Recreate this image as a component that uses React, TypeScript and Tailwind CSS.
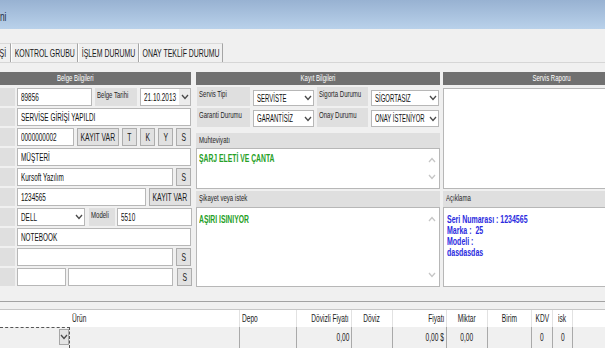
import React from "react";

type Origin = "l" | "r" | "c";

const T: React.FC<{ children?: React.ReactNode; o?: Origin; s?: string; className?: string }> = ({
  children,
  o = "l",
  s = "scale-x-[0.64]",
  className = "",
}) => {
  const origin = o === "l" ? "origin-left" : o === "r" ? "origin-right" : "origin-center";
  return <span className={`inline-block shrink-0 whitespace-pre ${s} ${origin} ${className}`}>{children}</span>;
};

const Chev = ({ up = false, c = "#4a4a4a" }: { up?: boolean; c?: string }) => (
  <svg width="8" height="6" viewBox="0 0 8 6" className="shrink-0">
    <path d={up ? "M1 5L4 1.5L7 5" : "M1 1L4 4.5L7 1"} fill="none" stroke={c} strokeWidth="1.3" />
  </svg>
);

const Box = ({ w, children }: { w: string; children?: React.ReactNode }) => (
  <div className={`${w} h-full shrink-0 bg-white border border-[#b7b7b7] flex items-center pl-[3px] overflow-hidden text-[10px] text-[#101010]`}>
    <T>{children}</T>
  </div>
);

const Select = ({ w, text, btn = false, s = "scale-x-[0.64]" }: { w: string; text: string; btn?: boolean; s?: string }) => (
  <div className={`${w} h-full shrink-0 bg-white border border-[#b7b7b7] flex items-center pl-[3px] overflow-hidden text-[10px] text-[#101010]`}>
    <div className="flex-1 min-w-0 overflow-hidden">
      <T s={s}>{text}</T>
    </div>
    <div className={`w-[11px] h-full shrink-0 flex items-center justify-center ${btn ? "bg-[#ececec]" : ""}`}>
      <Chev />
    </div>
  </div>
);

const Btn = ({ w, children }: { w: string; children: React.ReactNode }) => (
  <div className={`${w} h-full shrink-0 bg-[#e1e1e1] border border-[#adadad] flex items-center justify-center overflow-hidden text-[11px] text-[#1a1a1a]`}>
    <T o="c" s="scale-x-[0.62]">{children}</T>
  </div>
);

const Lbl = ({ w, children }: { w: string; children?: React.ReactNode }) => (
  <div className={`${w} h-full shrink-0 bg-[#dfdfdf] overflow-hidden pl-[2px] pt-[1px] text-[9px] leading-[12px] text-[#262626]`}>
    <T s="scale-x-[0.67]">{children}</T>
  </div>
);

const PanelHead = ({ children }: { children: React.ReactNode }) => (
  <div className="h-[13px] bg-[#707070] flex items-center justify-center overflow-hidden text-[9px] text-white">
    <T o="c" s="scale-x-[0.67]">{children}</T>
  </div>
);

const Bar = ({ children, h }: { children: React.ReactNode; h: string }) => (
  <div className={`${h} bg-[#dfdfdf] flex items-center pl-[3px] overflow-hidden text-[9px] text-[#262626]`}>
    <T s="scale-x-[0.67]">{children}</T>
  </div>
);

const Area = ({ h, children, arrows = false }: { h: string; children?: React.ReactNode; arrows?: boolean }) => (
  <div className={`${h} bg-white border border-[#b7b7b7] flex overflow-hidden`}>
    <div className="flex-1 min-w-0 pl-[2px] pt-[4px] overflow-hidden">{children}</div>
    {arrows && (
      <div className="w-[14px] shrink-0 flex flex-col items-center justify-between py-[8px]">
        <Chev up c="#c6c6c6" />
        <Chev c="#c6c6c6" />
      </div>
    )}
  </div>
);

const Tab = ({ w, children, extra = "" }: { w: string; children: React.ReactNode; extra?: string }) => (
  <div className={`${w} h-full shrink-0 border-t border-t-[#d9d9d9] border-l border-l-white border-r border-r-[#a5a5a5] flex items-center justify-center overflow-hidden text-[11px] text-[#1a1a1a] ${extra}`}>
    <T o="c" s="scale-x-[0.63]">{children}</T>
  </div>
);

const cols = [
  { w: "w-[70px]", head: "", val: "", j: "justify-start", o: "l" as Origin, hb: "", rb: "" },
  { w: "w-[170px]", head: "Ürün", val: "", j: "justify-start", o: "l" as Origin, hb: "border-r border-[#e2e2e2]", rb: "border-r border-[#a9a9a9]" },
  { w: "w-[57px]", head: "Depo", val: "", j: "justify-start", o: "l" as Origin, hb: "border-r border-[#e2e2e2]", rb: "border-r border-[#a9a9a9]" },
  { w: "w-[55px]", head: "Dövizli Fiyatı", val: "0,00", j: "justify-end", o: "r" as Origin, hb: "border-r border-[#e2e2e2]", rb: "border-r border-[#a9a9a9]" },
  { w: "w-[41px]", head: "Döviz", val: "", j: "justify-center", o: "c" as Origin, hb: "border-r border-[#e2e2e2]", rb: "border-r border-[#a9a9a9]" },
  { w: "w-[54px]", head: "Fiyatı", val: "0,00 $", j: "justify-end", o: "r" as Origin, hb: "border-r border-[#e2e2e2]", rb: "border-r border-[#a9a9a9]" },
  { w: "w-[41px]", head: "Miktar", val: "0,00", j: "justify-center", o: "c" as Origin, hb: "border-r border-[#e2e2e2]", rb: "border-r border-[#a9a9a9]" },
  { w: "w-[44px]", head: "Birim", val: "", j: "justify-center", o: "c" as Origin, hb: "border-r border-[#e2e2e2]", rb: "border-r border-[#a9a9a9]" },
  { w: "w-[21px]", head: "KDV", val: "0", j: "justify-center", o: "c" as Origin, hb: "border-r border-[#e2e2e2]", rb: "border-r border-[#a9a9a9]" },
  { w: "w-[20px]", head: "isk", val: "0", j: "justify-center", o: "c" as Origin, hb: "border-r border-[#e2e2e2]", rb: "border-r border-[#a9a9a9]" },
  { w: "w-[32px]", head: "", val: "", j: "justify-start", o: "l" as Origin, hb: "", rb: "" },
];

export default function App() {
  return (
    <div className="w-[605px] h-[348px] overflow-hidden bg-[#f0f0f0] font-['Liberation_Sans',Arial,sans-serif] text-[#1a1a1a]">
      {/* window title */}
      <div className="h-[29px] bg-linear-to-b from-[#98b2d2] to-[#b9d1ea] flex items-center pt-[4px]">
        <div className="w-[6px] shrink-0 flex justify-end text-[13px] text-[#1f2d44]">
          <T o="r">Servis Formu - Yeni</T>
        </div>
      </div>

      {/* tabs */}
      <div className="mt-[14px] h-[20px] flex border-b border-[#d6d6d6]">
        <Tab w="w-[58px]" extra="-ml-[47px]">SERVİS GİRİŞİ</Tab>
        <Tab w="w-[67px]">KONTROL GRUBU</Tab>
        <Tab w="w-[61px]">İŞLEM DURUMU</Tab>
        <Tab w="w-[84px]">ONAY TEKLİF DURUMU</Tab>
      </div>

      {/* panels */}
      <div className="mt-[9px] h-[216px] flex -ml-[41px]">
        {/* Belge Bilgileri */}
        <div className="w-[232px] shrink-0 flex flex-col">
          <PanelHead>Belge Bilgileri</PanelHead>
          <div className="mt-[3px] flex flex-col gap-[2px]">
            <div className="h-[18px] flex gap-[2px]">
              <Lbl w="w-[56px]">Belge Numara</Lbl>
              <div className="w-[174px] flex gap-[3px]">
                <Box w="w-[75px]">89856</Box>
                <Lbl w="w-[42px]">Belge Tarihi</Lbl>
                <Select w="w-[51px]" text="21.10.2013" btn />
              </div>
            </div>
            <div className="h-[18px] flex gap-[2px]">
              <Lbl w="w-[56px]" />
              <Box w="w-[174px]">SERVİSE GİRİŞİ YAPILDI</Box>
            </div>
            <div className="h-[18px] flex gap-[2px]">
              <Lbl w="w-[56px]" />
              <div className="w-[174px] flex gap-[3px]">
                <Box w="w-[57px]">0000000002</Box>
                <Btn w="w-[42px]">KAYIT VAR</Btn>
                <Btn w="w-[15px]">T</Btn>
                <Btn w="w-[15px]">K</Btn>
                <Btn w="w-[15px]">Y</Btn>
                <Btn w="w-[15px]">S</Btn>
              </div>
            </div>
            <div className="h-[18px] flex gap-[2px]">
              <Lbl w="w-[56px]" />
              <Box w="w-[174px]">MÜŞTERİ</Box>
            </div>
            <div className="h-[18px] flex gap-[2px]">
              <Lbl w="w-[56px]" />
              <div className="w-[174px] flex gap-[3px]">
                <Box w="w-[156px]">Kursoft Yazılım</Box>
                <Btn w="w-[15px]">S</Btn>
              </div>
            </div>
            <div className="h-[18px] flex gap-[2px]">
              <Lbl w="w-[56px]" />
              <div className="w-[174px] flex gap-[3px]">
                <Box w="w-[129px]">1234565</Box>
                <Btn w="w-[42px]">KAYIT VAR</Btn>
              </div>
            </div>
            <div className="h-[18px] flex gap-[2px]">
              <Lbl w="w-[56px]" />
              <div className="w-[174px] flex gap-[2px]">
                <Select w="w-[68px]" text="DELL" />
                <div className="w-[1px]" />
                <Lbl w="w-[26px]">Modeli</Lbl>
                <Box w="w-[75px]">5510</Box>
              </div>
            </div>
            <div className="h-[18px] flex gap-[2px]">
              <Lbl w="w-[56px]" />
              <Box w="w-[174px]">NOTEBOOK</Box>
            </div>
            <div className="h-[18px] flex gap-[2px]">
              <Lbl w="w-[56px]" />
              <div className="w-[174px] flex gap-[3px]">
                <Box w="w-[156px]" />
                <Btn w="w-[15px]">S</Btn>
              </div>
            </div>
            <div className="h-[18px] flex gap-[2px]">
              <Lbl w="w-[56px]" />
              <div className="w-[174px] flex gap-[2px]">
                <Box w="w-[49px]" />
                <Box w="w-[105px]" />
                <div className="w-[1px]" />
                <Btn w="w-[15px]">S</Btn>
              </div>
            </div>
          </div>
        </div>

        {/* Kayıt Bilgileri */}
        <div className="ml-[5px] w-[244px] shrink-0 flex flex-col">
          <PanelHead>Kayıt Bilgileri</PanelHead>
          <div className="mt-[2px] flex flex-col gap-[2px] pl-[1px]">
            <div className="h-[19px] flex gap-[3px]">
              <Lbl w="w-[53px]">Servis Tipi</Lbl>
              <div className="mt-[3px] h-[16px]"><Select w="w-[61px]" text="SERVİSTE" s="scale-x-[0.6]" /></div>
              <Lbl w="w-[51px]">Sigorta Durumu</Lbl>
              <div className="mt-[3px] h-[16px]"><Select w="w-[68px]" text="SİGORTASIZ" s="scale-x-[0.6]" /></div>
            </div>
            <div className="h-[19px] flex gap-[3px]">
              <Lbl w="w-[53px]">Garanti Durumu</Lbl>
              <div className="mt-[2px] h-[17px]"><Select w="w-[61px]" text="GARANTİSİZ" s="scale-x-[0.6]" /></div>
              <Lbl w="w-[51px]">Onay Durumu</Lbl>
              <div className="mt-[2px] h-[17px]"><Select w="w-[68px]" text="ONAY İSTENİYOR" s="scale-x-[0.59]" /></div>
            </div>
          </div>
          <div className="mt-[6px]">
            <Bar h="h-[15px]">Muhteviyatı</Bar>
          </div>
          <Area h="h-[41px]" arrows>
            <div className="text-[10px] font-bold text-[#26a026] leading-[12px]">
              <T s="scale-x-[0.68]">ŞARJ ELETİ VE ÇANTA</T>
            </div>
          </Area>
          <div className="mt-[2px]">
            <Bar h="h-[16px]">Şikayet veya istek</Bar>
          </div>
          <Area h="h-[80px]" arrows>
            <div className="text-[10px] font-bold text-[#26a026] leading-[12px] pt-[2px]">
              <T s="scale-x-[0.68]">AŞIRI ISINIYOR</T>
            </div>
          </Area>
        </div>

        {/* Servis Raporu */}
        <div className="ml-[3px] w-[218px] shrink-0 flex flex-col">
          <PanelHead>Servis Raporu</PanelHead>
          <div className="mt-[3px]">
            <Area h="h-[101px]" />
          </div>
          <div className="mt-[2px]">
            <Bar h="h-[16px]">Açıklama</Bar>
          </div>
          <Area h="h-[80px]">
            <div className="flex flex-col text-[10px] font-bold text-[#2b2be0] leading-[11px] pl-[1px] pt-[2px]">
              <T s="scale-x-[0.7]">Seri Numarası : 1234565</T>
              <T s="scale-x-[0.7]">Marka :  25</T>
              <T s="scale-x-[0.7]">Modeli :</T>
              <T s="scale-x-[0.7]">dasdasdas</T>
            </div>
          </Area>
        </div>
      </div>

      {/* grid */}
      <div className="mt-[13px] border-t border-[#a2a2a2]">
        <div className="h-[7px]" />
        <div className="h-[18px] border-t border-[#c6c6c6] bg-white flex text-[10px] text-[#1a1a1a]">
          {cols.map((c, i) => (
            <div key={i} className={`${c.w} h-full shrink-0 flex items-center overflow-hidden px-[2px] ${c.j} ${c.hb}`}>
              <T o={c.o} s="scale-x-[0.66]">{c.head}</T>
            </div>
          ))}
        </div>
        <div className="h-[21px] flex text-[10px] text-[#1a1a1a]">
          {cols.map((c, i) =>
            i === 0 ? (
              <div key={i} className="w-[70px] h-full shrink-0 border-t border-r border-dashed border-[#555555] flex justify-end pt-[1px]">
                <div className="w-[10px] h-[16px] bg-[#e4e4e4] border border-[#a6a6a6] flex items-center justify-center">
                  <Chev />
                </div>
              </div>
            ) : (
              <div key={i} className={`${c.w} h-full shrink-0 flex items-center overflow-hidden px-[2px] ${c.j} ${c.rb}`}>
                <T o={c.o} s="scale-x-[0.66]">{c.val}</T>
              </div>
            )
          )}
        </div>
      </div>
    </div>
  );
}
